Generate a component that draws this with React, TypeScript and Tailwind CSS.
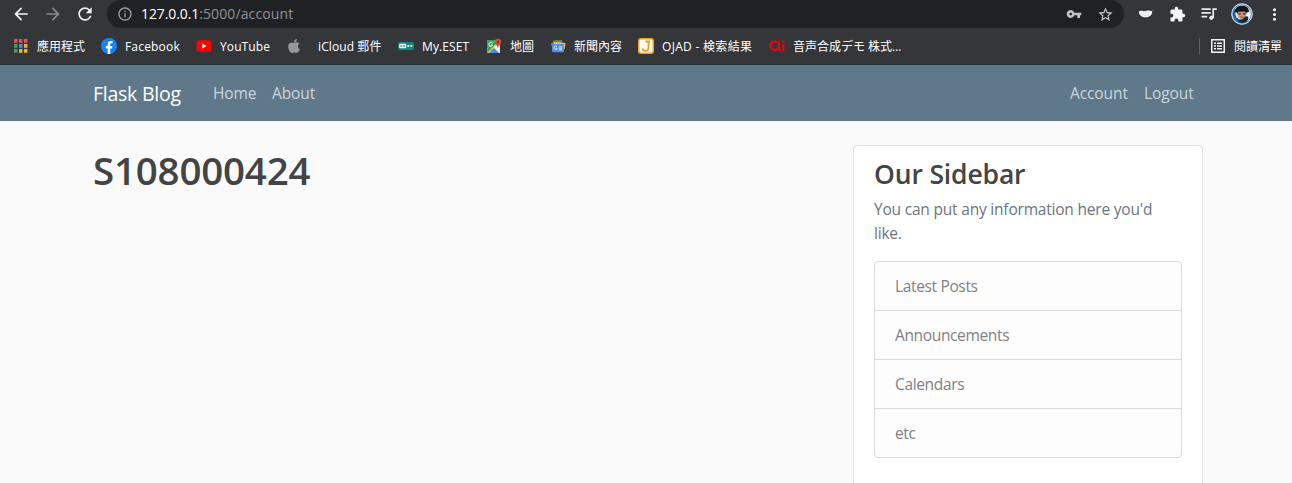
import type { ReactNode } from "react";
import {
  MdArrowBack,
  MdArrowForward,
  MdRefresh,
  MdInfoOutline,
  MdVpnKey,
  MdStarBorder,
  MdExtension,
  MdMoreVert,
} from "react-icons/md";
import { FaApple } from "react-icons/fa";

function AppsIcon() {
  const colors = ["#e0525a", "#e0525a", "#e0525a", "#3f9e5c", "#4a8af0", "#e8b42c", "#3f9e5c", "#e8b42c", "#e8b42c"];
  return (
    <svg viewBox="0 0 16 16" className="size-4">
      {colors.map((c, i) => (
        <rect key={i} x={1 + (i % 3) * 5} y={1 + Math.floor(i / 3) * 5} width="3.4" height="3.8" fill={c} />
      ))}
    </svg>
  );
}

function FacebookIcon() {
  return (
    <svg viewBox="0 0 16 16" className="size-4">
      <circle cx="8" cy="8" r="8" fill="#1685f3" />
      <path d="M6.8 16v-5.6H4.8V8h2V6.2c0-2 1.2-3.1 3-3.1.9 0 1.7.1 1.7.1v2h-1c-1 0-1.3.6-1.3 1.2V8h2.2l-.4 2.4H9.2V16Z" fill="#fff" />
    </svg>
  );
}

function YouTubeIcon() {
  return (
    <svg viewBox="0 0 16 16" className="size-4">
      <rect x=".5" y="2.3" width="15" height="11.4" rx="2.2" fill="#f90505" />
      <path d="M6.3 5.5v5L10.6 8Z" fill="#fff" />
    </svg>
  );
}

function EsetIcon() {
  return (
    <svg viewBox="0 0 16 16" className="size-4">
      <rect x="0" y="4" width="16" height="8" rx="2" fill="#0b877d" />
      <rect x="1.2" y="5.8" width="7" height="4.4" rx="1" fill="#fff" />
      <path d="M2.5 8h1.6M5.2 8h1.7" stroke="#0b877d" strokeWidth="1.5" />
      <path d="M9.4 8h1.8M12.5 8h1.8" stroke="#fff" strokeWidth="1.8" />
    </svg>
  );
}

function MapsIcon() {
  return (
    <svg viewBox="0 0 16 16" className="size-4">
      <rect x="1" y="2" width="13" height="13" rx="1" fill="#e6e6e2" />
      <path d="M1 3a1 1 0 0 1 1-1h8L1 11Z" fill="#35a35c" />
      <path d="M1 12.5 11.5 2 14 5 4 15H1Z" fill="#f5cc4b" />
      <path d="m1 11 8-8 2 2-9.6 9.8Z" fill="#35a35c" />
      <path d="m8 9 6 6V8l-2-3Z" fill="#eeeeea" />
      <path d="M3 15 8 10l5 5Z" fill="#4489ef" />
      <path d="M12 10c-.4-2.3-3.2-3.4-3.2-6a3.2 3.2 0 0 1 6.4 0c0 2.6-2.8 3.7-3.2 6Z" fill="#df493d" />
      <circle cx="12" cy="4" r="1.2" fill="#852a22" />
      <path d="M6.4 5.2a2 2 0 1 0 .2 2H5" fill="none" stroke="#fff" strokeWidth=".9" />
    </svg>
  );
}

function NewsIcon() {
  return (
    <svg viewBox="0 0 16 16" className="size-4">
      <path d="M3 2.4 12 2l.5 6H3Z" fill="#3a9c60" />
      <path d="m1 5 10-2 1 5H1.5Z" fill="#db5a50" />
      <path d="m4 4 11.5 1-.8 6H4Z" fill="#efc34e" />
      <rect x="2" y="6" width="12" height="8.3" rx="1" fill="#4f8df0" />
      <path d="M7 8.7a1.7 1.7 0 1 0 .3 1.6H5.9M9 8.8h3.3M9 10.3h3M9 11.8h3.3" fill="none" stroke="#e7effd" strokeWidth=".9" />
    </svg>
  );
}

function OjadIcon() {
  return (
    <svg viewBox="0 0 16 16" className="size-4">
      <rect x=".75" y=".75" width="14.5" height="14.5" rx="2.2" fill="#fffdf7" stroke="#eda51e" strokeWidth="1.5" />
      <path d="M7.4 3.5h4.6M10.5 3.5v6.4c0 3.6-5.4 3.8-6 .6" fill="none" stroke="#e9a01d" strokeWidth="1.8" />
    </svg>
  );
}

function AiIcon() {
  return (
    <svg viewBox="0 0 16 16" className="size-4">
      <path d="M10 3.6v6c0 2 .7 2.8 2 2.8M9.7 5.2C7.5 2.4 1.4 3.3 1.4 7.8c0 4.8 6.5 5.6 8.3 1.8" fill="none" stroke="#d30d1b" strokeWidth="2.4" />
      <path d="M14.2 6.3v6.8" stroke="#d30d1b" strokeWidth="2.3" />
      <circle cx="14.2" cy="3.9" r="1.3" fill="#d30d1b" />
    </svg>
  );
}

function BowlIcon() {
  return (
    <svg viewBox="0 0 18 12" className="h-3 w-[18px]">
      <path d="M.8 3.4c1.4-.9 3.2-.8 5.2-.2 2.6-.7 5.6-1 8 .1.6 3.6-2.2 6-6.2 6C3.8 9.3.9 7 .8 3.4Z" fill="#f4f4f4" />
      <path d="M4.5 6.7c2 .8 4.6.8 6.3 0M4 4.6h7" fill="none" stroke="#c9cacc" strokeWidth=".4" />
      <path d="M14 2.3h2" stroke="#77797c" strokeWidth=".8" />
    </svg>
  );
}

function PlaylistIcon() {
  return (
    <svg viewBox="0 0 16 14" className="h-3.5 w-4" fill="none" stroke="#e8eaed" strokeWidth="1.7">
      <path d="M.5 2.2h9.2M.5 5.9h9.2M.5 9.6h5.7" />
      <path d="M12.2 11V2.1h3.6" />
      <circle cx="10.4" cy="10.8" r="1.7" fill="#e8eaed" strokeWidth="1" />
    </svg>
  );
}

function Avatar() {
  return (
    <svg viewBox="0 0 22 22" className="size-[22px]">
      <circle cx="11" cy="11" r="10" fill="#f3f6f8" />
      <path d="M3.5 5a10 10 0 0 0 6.5 15.4l-.5-3.4-4.5-3Z" fill="#1b5da8" />
      <path d="M6.6 9h8.6v3.6c0 4.2-8.6 4.6-8.6 0Z" fill="#c99780" />
      <path d="M3.6 9.2C4 4.6 7 2.6 11 2.8c4.4-.4 7.2 2.4 7 6.2l-2.6.4-.3 2.4-.8-3H7.2l-.6 3-.6-2.4Z" fill="#121419" />
      <path d="M7.6 10.9h2.2M12 10.9h2.2" stroke="#32252a" strokeWidth="1.4" />
      <path d="M9.4 14.2h3" stroke="#a33a3f" strokeWidth="1.1" />
      <path d="M7.2 20c.4-3.2 1.6-4 3.8-3.6 2-.8 2.6-3.8 5.4-3 2.2 1 .4 5-3 7Z" fill="#20252c" />
      <circle cx="11" cy="11" r="9.4" fill="none" stroke="#2a78cc" strokeWidth="1" />
      <circle cx="11" cy="11" r="10.3" fill="none" stroke="#d5e7f7" strokeWidth="1" />
    </svg>
  );
}

function ReadingListIcon() {
  return (
    <svg viewBox="0 0 14 14" className="size-3.5" fill="none" stroke="#f1f3f4">
      <rect x=".75" y=".75" width="12.5" height="12.5" strokeWidth="1.5" />
      <path d="M3 4.2h2M3 7h2M3 9.8h2M6 4.2h5M6 7h5M6 9.8h5" strokeWidth="1.4" />
    </svg>
  );
}

function Bookmark({ icon, label, width }: { icon: ReactNode; label: string; width: string }) {
  return (
    <div className="mr-4 flex shrink-0 items-center gap-2">
      {icon}
      <span className={`whitespace-nowrap pt-px ${width}`}>{label}</span>
    </div>
  );
}

function BrowserBar() {
  return (
    <header className="h-[65px] shrink-0 border-b border-[#26333d] bg-[#35363a] text-white">
      <div className="flex h-7 items-center">
        <MdArrowBack className="ml-[11px] size-5 text-[#f1f3f4]" />
        <MdArrowForward className="ml-3 size-5 text-[#87898c]" />
        <MdRefresh className="ml-3 size-5 text-[#f1f3f4]" />
        <div className="ml-3 flex h-7 w-[1017px] items-center rounded-[14px] bg-[#202124] pl-2.5">
          <MdInfoOutline className="size-4 text-[#9aa0a6]" />
          <div className="ml-2 w-[160px] whitespace-nowrap font-['Open_Sans'] text-[14px] leading-5 text-[#8f9297]">
            <span className="tracking-[-0.1px] text-white">127.0.0.1</span>
            <span className="tracking-[0.12px]">:5000/account</span>
          </div>
          <MdVpnKey className="ml-auto size-4 text-[#c0c2c5]" />
          <MdStarBorder className="ml-[15px] mr-2.5 size-[17px] text-[#c9cbce]" />
        </div>
        <div className="ml-3.5">
          <BowlIcon />
        </div>
        <MdExtension className="ml-[13px] size-[17px] text-[#f1f3f4]" />
        <div className="ml-[15px]">
          <PlaylistIcon />
        </div>
        <div className="ml-[14px]">
          <Avatar />
        </div>
        <MdMoreVert className="ml-3 size-[19px] text-[#f1f3f4]" />
      </div>
      <nav className="flex h-9 items-center pl-[13px] font-['Open_Sans','Noto_Sans_CJK_TC',sans-serif] text-[12px] leading-4">
        <Bookmark icon={<AppsIcon />} label="應用程式" width="w-12" />
        <Bookmark icon={<FacebookIcon />} label="Facebook" width="w-[55px] tracking-[0.18px]" />
        <Bookmark icon={<YouTubeIcon />} label="YouTube" width="w-[50px] tracking-[0.1px]" />
        <Bookmark icon={<FaApple className="size-4 text-[#96979a]" />} label="iCloud 郵件" width="w-[72px] pl-2 tracking-[0.1px]" />
        <Bookmark icon={<EsetIcon />} label="My.ESET" width="w-12 tracking-[0.1px]" />
        <Bookmark icon={<MapsIcon />} label="地圖" width="w-6" />
        <Bookmark icon={<NewsIcon />} label="新聞內容" width="w-12" />
        <Bookmark icon={<OjadIcon />} label="OJAD - 検索結果" width="w-[91px] tracking-[0.3px]" />
        <Bookmark icon={<AiIcon />} label="音声合成デモ 株式…" width="w-[109px]" />
        <div className="ml-auto flex items-center pr-[10px]">
          <span className="h-4 w-px bg-[#5f6368]" />
          <span className="ml-[11px]">
            <ReadingListIcon />
          </span>
          <span className="ml-[9px] w-12 whitespace-nowrap pt-px">閱讀清單</span>
        </div>
      </nav>
    </header>
  );
}

const sidebarItems = ["Latest Posts", "Announcements", "Calendars", "etc"];

export default function App() {
  return (
    <div className="flex h-[483px] w-[1292px] flex-col overflow-hidden bg-[#fafafa] font-['Open_Sans',sans-serif]">
      <BrowserBar />
      <nav className="flex h-14 shrink-0 items-center bg-[#5f788a] pl-[93px] pr-[97px] text-[15.5px] leading-6 tracking-[-0.1px] text-[#cbd5db]">
        <a className="w-[120px] pt-0.5 text-[19.5px] leading-[30px] tracking-[-0.25px] text-white">Flask Blog</a>
        <a className="w-[59px]">Home</a>
        <a>About</a>
        <a className="ml-auto w-[74px]">Account</a>
        <a className="w-[51px]">Logout</a>
      </nav>
      <main className="flex justify-between pl-[93px] pr-[89px] pt-6">
        <h1 className="pt-px text-[38.5px] font-semibold leading-[48px] tracking-[-0.2px] text-[#444444]">S108000424</h1>
        <aside className="h-[360px] w-[350px] rounded border border-[#dfdfdf] bg-white px-5 pt-[11px]">
          <h3 className="text-[26.5px] font-semibold leading-[34px] tracking-[-0.15px] text-[#444444]">Our Sidebar</h3>
          <p className="mt-1.5 text-[15.5px] leading-6 tracking-[-0.2px] text-[#6c757d]">
            You can put any information here you'd
            <br />
            like.
          </p>
          <ul className="mt-4 divide-y divide-[#d9dbdd] rounded border border-[#d9dbdd] bg-[#fdfdfe] text-[15.5px] leading-6 tracking-[-0.35px] text-[#818182]">
            {sidebarItems.map((item) => (
              <li key={item} className="px-5 py-3">
                {item}
              </li>
            ))}
          </ul>
        </aside>
      </main>
    </div>
  );
}
